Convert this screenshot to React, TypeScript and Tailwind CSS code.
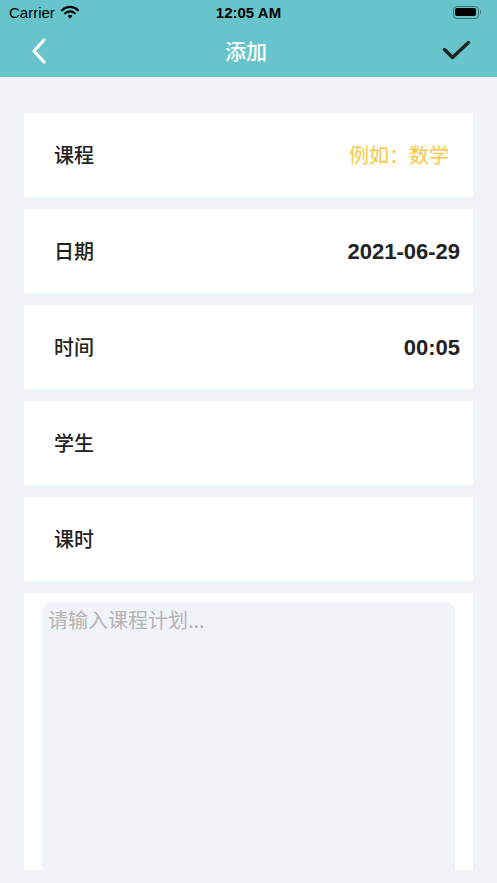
import React from 'react'

const cn = '"Noto Sans CJK SC", "Liberation Sans", sans-serif'

function StatusBar() {
    return (
        <div className="relative flex h-[24px] items-center justify-between px-[9px] text-black" style={{ fontFamily: '"Liberation Sans", sans-serif' }}>
            <div className="flex items-center gap-[6px]">
                <span className="text-[15px] leading-none">Carrier</span>
                <svg width="18" height="14" viewBox="0 0 18 14">
                    <path d="M1 5.2 A11.5 11.5 0 0 1 17 5.2" fill="none" stroke="#000" strokeWidth="2.2" strokeLinecap="round" />
                    <path d="M4.2 8.3 A7 7 0 0 1 13.8 8.3" fill="none" stroke="#000" strokeWidth="2.2" strokeLinecap="round" />
                    <path d="M6.6 11 L9 13.4 L11.4 11 A3.4 3.4 0 0 0 6.6 11 Z" fill="#000" />
                </svg>
            </div>
            <span className="absolute left-1/2 -translate-x-1/2 text-[15px] font-bold leading-none">12:05 AM</span>
            <div className="flex items-center pr-[7px]">
                <div className="flex h-[13px] w-[26px] items-center rounded-[4px] border border-[#3f6e71] p-[1.5px]">
                    <div className="h-full w-full rounded-[2px] bg-black" />
                </div>
                <div className="ml-[1px] h-[4px] w-[1.5px] rounded-r-sm bg-[#3f6e71]" />
            </div>
        </div>
    )
}

function NavBar() {
    return (
        <div className="flex h-[53px] items-center justify-between px-[30px]">
            <svg width="20" height="28" viewBox="0 0 20 28">
                <path d="M14 3 L4 14 L14 25" fill="none" stroke="#fff" strokeWidth="3.2" strokeLinecap="round" strokeLinejoin="round" />
            </svg>
            <span className="text-[21px] font-medium leading-none text-white" style={{ fontFamily: cn }}>添加</span>
            <svg width="30" height="22" viewBox="0 0 30 22" className="-mr-[5px]">
                <path d="M2.5 9.5 L10.5 17.5 L26.5 2.5" fill="none" stroke="#222" strokeWidth="3.4" strokeLinecap="round" strokeLinejoin="round" />
            </svg>
        </div>
    )
}

function Row({ label, value, hint }: { label: string, value?: string, hint?: string }) {
    return (
        <div className="flex h-[84px] items-center justify-between bg-white pl-[30px] pr-[13px]">
            <span className="text-[20px] font-medium text-[#222]" style={{ fontFamily: cn }}>{label}</span>
            {value && <span className="text-[22px] font-bold text-[#222]" style={{ fontFamily: '"Liberation Sans", sans-serif' }}>{value}</span>}
            {hint && <span className="pr-[11px] text-[20px] text-[#f5c843]" style={{ fontFamily: cn }}>{hint}</span>}
        </div>
    )
}

export default function App() {
    return (
        <div className="flex h-[883px] w-full flex-col overflow-hidden bg-[#f0f3f8]">
            <div className="bg-[#66c4ca]">
                <StatusBar />
                <NavBar />
            </div>
            <div className="flex flex-col gap-3 px-6 pt-9">
                <Row label="课程" hint="例如：数学" />
                <Row label="日期" value="2021-06-29" />
                <Row label="时间" value="00:05" />
                <Row label="学生" />
                <Row label="课时" />
                <div className="h-[277px] overflow-hidden bg-white px-[18px] pt-[9px]">
                    <div className="h-[320px] rounded-[10px] bg-[#f0f3f8] px-[6px] pt-[3px] text-[20px] text-[#b5b5b5]" style={{ fontFamily: cn }}>
                        请输入课程计划...
                    </div>
                </div>
            </div>
        </div>
    )
}
